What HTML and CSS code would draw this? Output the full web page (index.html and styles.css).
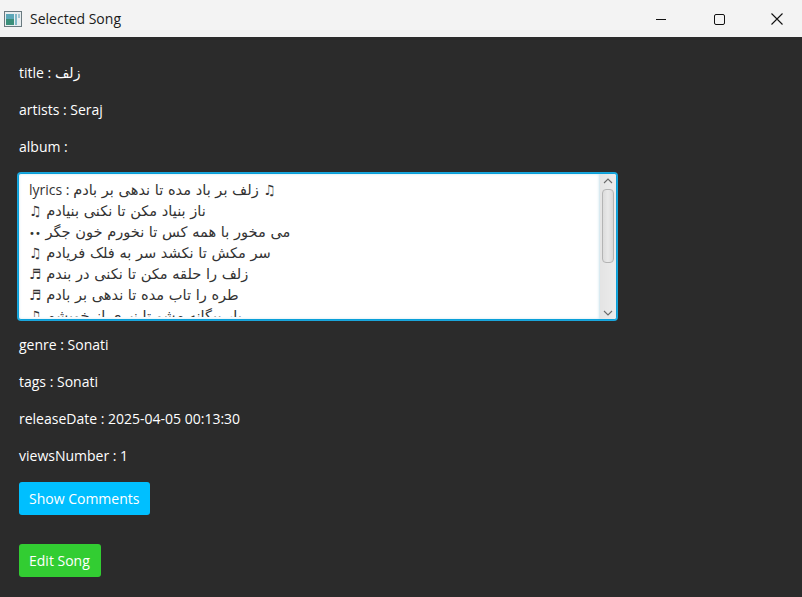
FILE: index.html
```html
<!DOCTYPE html>
<html>
<head>
<meta charset="utf-8">
<link rel="stylesheet" href="styles.css">
</head>
<body>
<div class="window">
  <div class="titlebar">
    <div class="app-icon">
      <svg width="18" height="16" viewBox="0 0 18 16">
        <rect x="0.5" y="0.5" width="17" height="15" fill="#e8eef0" stroke="#6a7a80"/>
        <rect x="2" y="3" width="8" height="11" fill="#3b8f7a"/>
        <rect x="2" y="3" width="8" height="5" fill="#5aa7b8"/>
        <rect x="11" y="3" width="2" height="11" fill="#7fb8c8"/>
        <rect x="14" y="3" width="2" height="4" fill="#9fc6d2"/>
      </svg>
    </div>
    <div class="title-text">Selected Song</div>
    <div class="controls">
      <div class="ctl">
        <svg width="12" height="12" viewBox="0 0 12 12"><line x1="1" y1="6.5" x2="11" y2="6.5" stroke="#111" stroke-width="1"/></svg>
      </div>
      <div class="ctl">
        <svg width="12" height="12" viewBox="0 0 12 12"><rect x="1.5" y="1.5" width="10" height="10" rx="1.5" fill="none" stroke="#111" stroke-width="1"/></svg>
      </div>
      <div class="ctl">
        <svg width="14" height="14" viewBox="0 0 14 14"><path d="M1.5 1.5 L12.5 12.5 M12.5 1.5 L1.5 12.5" stroke="#111" stroke-width="1.1"/></svg>
      </div>
    </div>
  </div>
  <div class="content">
    <div class="label">title : زلف</div>
    <div class="label">artists : Seraj</div>
    <div class="label">album :</div>
    <div class="textarea">
      <div class="text">
        <div class="line"><span class="latin">lyrics : </span>زلف بر باد مده تا ندهی بر بادم <span class="note">♫</span></div>
        <div class="line"><span class="note">♫</span> ناز بنیاد مکن تا نکنی بنیادم</div>
        <div class="line"><span class="dots">••</span> می مخور با همه کس تا نخورم خون جگر</div>
        <div class="line"><span class="note">♫</span> سر مکش تا نکشد سر به فلک فریادم</div>
        <div class="line"><span class="note">♬</span> زلف را حلقه مکن تا نکنی در بندم</div>
        <div class="line"><span class="note">♬</span> طره را تاب مده تا ندهی بر بادم</div>
        <div class="line line-cut"><span class="note">♫</span> یار بیگانه مشو تا نبری از خویشم</div>
      </div>
      <div class="scrollbar">
        <svg class="arrow" width="10" height="6" viewBox="0 0 10 6"><path d="M1 5 L5 1 L9 5" fill="none" stroke="#6b6b6b" stroke-width="1.1"/></svg>
        <div class="thumb"></div>
        <div class="track-rest"></div>
        <svg class="arrow" width="10" height="6" viewBox="0 0 10 6"><path d="M1 1 L5 5 L9 1" fill="none" stroke="#6b6b6b" stroke-width="1.1"/></svg>
      </div>
    </div>
    <div class="label">genre : Sonati</div>
    <div class="label">tags : Sonati</div>
    <div class="label">releaseDate : 2025-04-05 00:13:30</div>
    <div class="label">viewsNumber : 1</div>
    <div class="btn btn-blue">Show Comments</div>
    <div class="btn btn-green">Edit Song</div>
  </div>
</div>
</body>
</html>
```
FILE: styles.css
```css
html, body {
  margin: 0;
  padding: 0;
}
body {
  width: 802px;
  height: 597px;
  overflow: hidden;
  background: #2b2b2b;
  font-family: "Open Sans", "DejaVu Sans", sans-serif;
}
.window {
  display: flex;
  flex-direction: column;
  height: 597px;
}
.titlebar {
  height: 37px;
  background: #f3f3f3;
  display: flex;
  align-items: center;
  flex-shrink: 0;
}
.app-icon {
  width: 18px;
  height: 16px;
  margin-left: 4px;
  margin-right: 8px;
  display: flex;
}
.title-text {
  font-size: 14px;
  color: #1a1a1a;
  flex: 1;
}
.controls {
  display: flex;
  height: 37px;
  margin-right: -4px;
}
.ctl {
  width: 58px;
  display: flex;
  align-items: center;
  justify-content: center;
}
.content {
  padding: 26px 19px 0 19px;
  display: flex;
  flex-direction: column;
  align-items: flex-start;
  gap: 17px;
}
.label {
  color: #ffffff;
  font-size: 14px;
  line-height: 20px;
  height: 20px;
  white-space: nowrap;
}
.textarea {
  align-self: flex-start;
  margin-left: -1px;
  margin-top: -1px;
  margin-bottom: -2px;
  width: 597px;
  height: 145px;
  border: 1px solid #0a9fd8;
  box-shadow: 0 0 0 1px #1aa6dc;
  border-radius: 3px;
  background: #ffffff;
  display: flex;
  overflow: hidden;
}
.text {
  flex: 1;
  padding: 5px 10px 0 10px;
  box-shadow: inset 0 0 3px #cfe6ef;
  overflow: hidden;
  direction: ltr;
}
.line {
  font-family: "DejaVu Sans", sans-serif;
  font-size: 14.6px;
  line-height: 21px;
  height: 21px;
  color: #333333;
  white-space: nowrap;
  direction: ltr;
  text-align: left;
}
.line-cut {
  height: 12px;
  overflow: hidden;
}
.latin {
  font-family: "Open Sans", sans-serif;
  font-size: 14px;
}
.note {
  font-family: "DejaVu Sans", sans-serif;
  font-size: 14px;
  font-weight: bold;
}
.dots {
  font-size: 10px;
  letter-spacing: -1px;
}
.scrollbar {
  width: 16px;
  background: linear-gradient(to right, #e4e4e4, #ececec);
  border-left: 1px solid #d9eaf1;
  display: flex;
  flex-direction: column;
  align-items: center;
  padding: 4px 0 3px 0;
  gap: 3px;
}
.arrow {
  flex-shrink: 0;
}
.thumb {
  width: 10px;
  height: 72px;
  margin-top: 2px;
  border: 1px solid #b4b4b4;
  border-radius: 4px;
  background: linear-gradient(to right, #dcdcdc, #e9e9e9, #d8d8d8);
  flex-shrink: 0;
}
.track-rest {
  flex: 1;
}
.btn {
  font-size: 14px;
  color: #ffffff;
  height: 33px;
  line-height: 33px;
  padding: 0 11px 0 10px;
  border-radius: 3px;
  white-space: nowrap;
}
.btn-blue {
  background: #00bfff;
  margin-top: -1px;
}
.btn-green {
  background: #32cd32;
  margin-top: 12px;
}
```
